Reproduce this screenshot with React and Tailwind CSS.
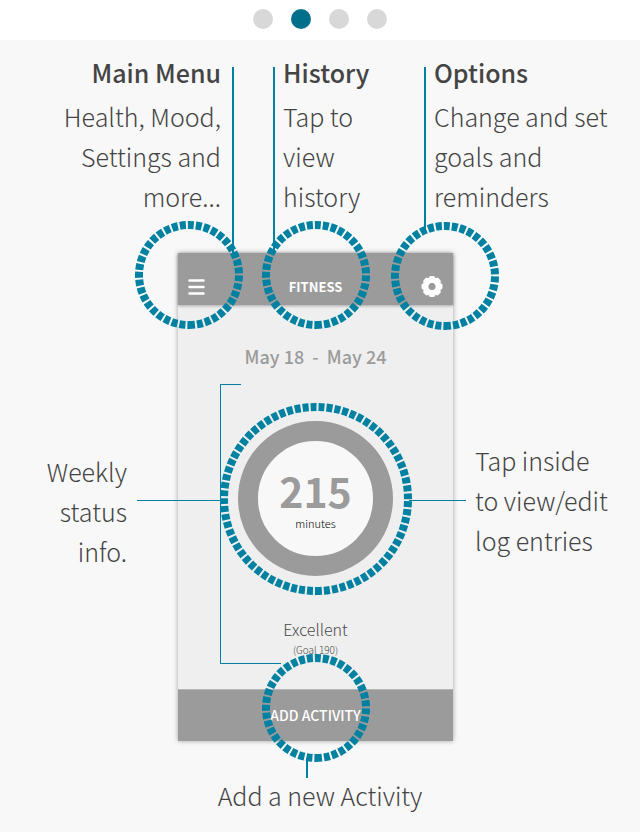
import React from "react";

const TEAL = "#0081a1";

// Dashed highlight ring; the dashes begin at the bottom and run counter-clockwise.
function Ring({ radius, className }) {
  const half = radius + 4;
  return (
    <svg
      className={`pointer-events-none absolute ${className}`}
      width={half * 2}
      height={half * 2}
      viewBox={`${-half} ${-half} ${half * 2} ${half * 2}`}
      aria-hidden="true"
    >
      <circle
        r={radius}
        fill="none"
        stroke={TEAL}
        strokeWidth="8"
        strokeDasharray="6 2"
        transform="rotate(90) scale(1 -1)"
      />
    </svg>
  );
}

function GearIcon() {
  return (
    <svg width="22" height="22" viewBox="-11 -10.5 22 22" aria-hidden="true">
      <g fill="#fff">
        {[0, 45, 90, 135, 180, 225, 270, 315].map((a) => (
          <rect key={a} x="-3.2" y="-10.5" width="6.4" height="7" rx="2" transform={`rotate(${a})`} />
        ))}
      </g>
      <circle r="6.6" fill="none" stroke="#fff" strokeWidth="5" />
    </svg>
  );
}

function MenuIcon() {
  return (
    <svg width="18" height="16" viewBox="0 0 18 16" aria-hidden="true">
      <path d="M1.5 1.5h14M1.5 8h14M1.5 14.5h14" stroke="#fff" strokeWidth="2.5" strokeLinecap="round" />
    </svg>
  );
}

function Dots() {
  return (
    <nav aria-label="Tour pages" className="flex h-10 items-center justify-center gap-[18px] bg-white pb-[2px]">
      <button aria-label="Page 1" className="h-5 w-5 rounded-full bg-[#d8d8d8]" />
      <button aria-label="Page 2" aria-current="true" className="h-5 w-5 rounded-full bg-[#006f8b]" />
      <button aria-label="Page 3" className="h-5 w-5 rounded-full bg-[#d8d8d8]" />
      <button aria-label="Page 4" className="h-5 w-5 rounded-full bg-[#d8d8d8]" />
    </nav>
  );
}

function Phone() {
  return (
    <div className="relative">
      <section className="flex h-[488px] flex-col bg-[#efefef] shadow-[0_0_5px_rgba(0,0,0,0.35)]">
        <header className="flex h-[52px] items-center justify-between bg-[#9b9b9b] px-[10px] pt-4 shadow-[0_1px_3px_rgba(0,0,0,0.3)]">
          <button aria-label="Main menu" className="w-[22px]"><MenuIcon /></button>
          <button className="text-[13px] font-bold leading-[22px] text-white">FITNESS</button>
          <button aria-label="Options" className="w-[22px]"><GearIcon /></button>
        </header>
        <div className="flex flex-1 flex-col items-center">
          <p className="mt-[37px] whitespace-pre text-[18px] font-medium leading-7 text-[#9b9b9b]">May 18  -  May 24</p>
          <button className="mt-[51px] flex h-[155px] w-[155px] flex-col items-center rounded-full border-[20px] border-[#9b9b9b] bg-[#f8f8f8] pt-6">
            <span className="text-[41px] font-bold leading-[50px] text-[#9b9b9b]">215</span>
            <span className="text-[11px] font-light leading-4 text-black">minutes</span>
          </button>
          <p className="mt-[41px] text-[16px] font-light leading-6 text-[#4a4a4a]">Excellent</p>
          <p className="text-[10px] font-light leading-[18px] text-[#4a4a4a]">(Goal 190)</p>
        </div>
        <button className="h-[52px] border-t border-[#b5b5b5] bg-[#9b9b9b] pb-[2px] text-[14px] font-medium leading-5 text-white">
          ADD ACTIVITY
        </button>
      </section>

      <span className="absolute -top-[186px] left-[54px] h-[186px] w-[2px] bg-[#0081a1]" />
      <span className="absolute -top-[186px] left-[95px] h-[184px] w-[2px] bg-[#0081a1]" />
      <span className="absolute -top-[186px] left-[246px] h-[162px] w-[2px] bg-[#0081a1]" />
      <span className="absolute left-[42px] top-[131px] h-[280px] w-[21px] border-l border-t border-[#0081a1]" />
      <span className="absolute left-[42px] top-[410px] h-px w-[61px] bg-[#0081a1]" />
      <span className="absolute -left-[41px] top-[247px] h-px w-[84px] bg-[#0081a1]" />
      <span className="absolute left-[231px] top-[247px] h-px w-[57px] bg-[#0081a1]" />
      <span className="absolute left-[128px] top-[505px] h-5 w-[2px] bg-[#0081a1]" />

      <Ring radius={50} className="-left-[43px] -top-8" />
      <Ring radius={50} className="left-[84px] -top-8" />
      <Ring radius={50} className="left-[213px] -top-[31px]" />
      <Ring radius={92} className="left-[42px] top-[150px]" />
      <Ring radius={50} className="left-[84px] top-[401px]" />
    </div>
  );
}

export default function App() {
  return (
    <div className="min-h-screen bg-[#f8f8f8] font-['Noto_Sans_CJK_SC',sans-serif] text-[25px] font-light leading-10 text-[#444]">
      <Dots />
      <main className="pt-3">
        <div className="grid grid-cols-[minmax(0,1fr)_213px_minmax(0,1fr)] pl-[15px]">
          <div className="text-right">
            <h2 className="mb-1 font-medium">Main Menu</h2>
            <p>Health, Mood,<br />Settings and<br />more...</p>
          </div>
          <div className="pl-[62px]">
            <h2 className="mb-1 font-medium">History</h2>
            <p>Tap to<br />view<br />history</p>
          </div>
          <div className="whitespace-nowrap">
            <h2 className="mb-1 font-medium">Options</h2>
            <p>Change and set<br />goals and<br />reminders</p>
          </div>
        </div>
        <div className="mt-[37px] grid grid-cols-[minmax(0,1fr)_275px_minmax(0,1fr)] pr-[9px]">
          <p className="pr-[51px] pt-[198px] text-right">Weekly<br />status<br />info.</p>
          <Phone />
          <p className="whitespace-nowrap pl-[22px] pt-[187px]">Tap inside<br />to view/edit<br />log entries</p>
        </div>
        <p className="mt-[34px] text-center">Add a new Activity</p>
      </main>
    </div>
  );
}
